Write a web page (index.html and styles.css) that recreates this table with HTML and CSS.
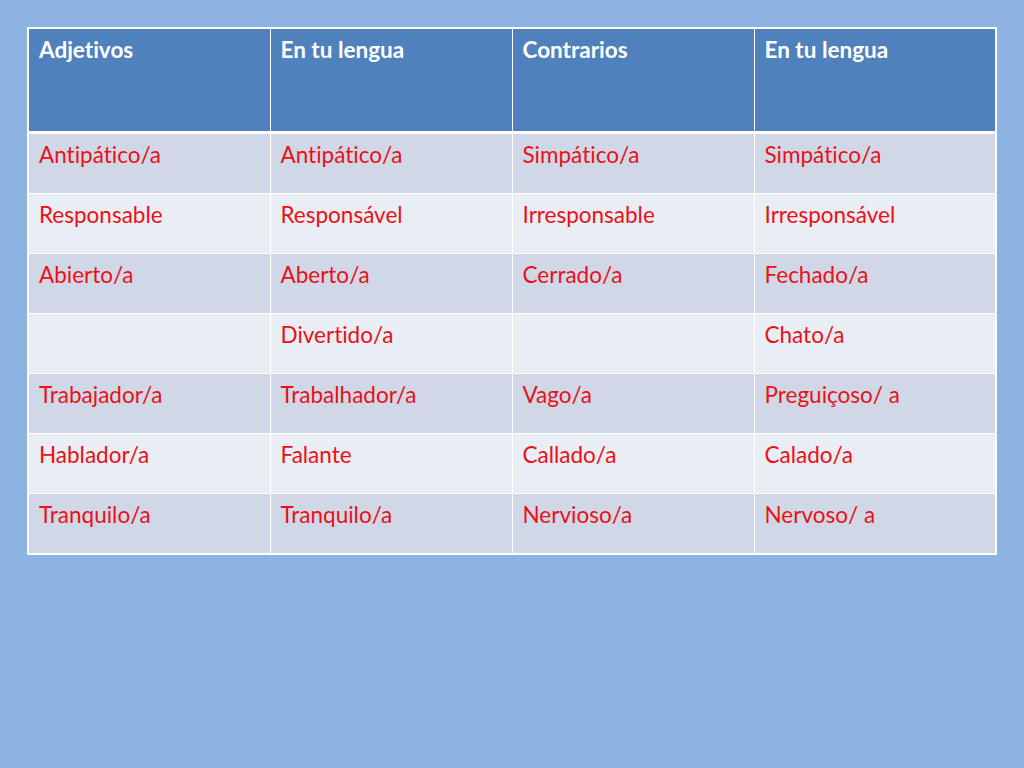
FILE: index.html
```html
<!DOCTYPE html>
<html lang="es">
<head>
<meta charset="utf-8">
<title>Adjetivos</title>
<link rel="stylesheet" href="styles.css">
</head>
<body>
<div class="slide">
<table class="vocab">
<thead>
<tr><th>Adjetivos</th><th>En tu lengua</th><th>Contrarios</th><th>En tu lengua</th></tr>
</thead>
<tbody>
<tr><td>Antipático/a</td><td>Antipático/a</td><td>Simpático/a</td><td>Simpático/a</td></tr>
<tr><td>Responsable</td><td>Responsável</td><td>Irresponsable</td><td>Irresponsável</td></tr>
<tr><td>Abierto/a</td><td>Aberto/a</td><td>Cerrado/a</td><td>Fechado/a</td></tr>
<tr><td></td><td>Divertido/a</td><td></td><td>Chato/a</td></tr>
<tr><td>Trabajador/a</td><td>Trabalhador/a</td><td>Vago/a</td><td>Preguiçoso/ a</td></tr>
<tr><td>Hablador/a</td><td>Falante</td><td>Callado/a</td><td>Calado/a</td></tr>
<tr><td>Tranquilo/a</td><td>Tranquilo/a</td><td>Nervioso/a</td><td>Nervoso/ a</td></tr>
</tbody>
</table>
</div>
</body>
</html>
```
FILE: styles.css
```css
html, body {
  margin: 0;
  padding: 0;
}
body {
  background: #8db3e2;
  font-family: "Lato", "Open Sans", sans-serif;
  font-variant-ligatures: none;
}
.slide {
  width: 1024px;
  height: 768px;
  padding: 27px 0 0 27px;
  box-sizing: border-box;
}
.vocab {
  border-collapse: collapse;
  width: 970px;
  table-layout: fixed;
  border: 2px solid #ffffff;
}
.vocab th, .vocab td {
  border: 1px solid #ffffff;
  text-align: left;
  vertical-align: top;
  padding: 7px 10px 0 10px;
  font-size: 22.5px;
  line-height: 27px;
}
.vocab th {
  background: #4f81bd;
  color: #ffffff;
  font-weight: bold;
  height: 95px;
  border-bottom: 3px solid #ffffff;
}
.vocab td {
  color: #ec1016;
  height: 52px;
}
.vocab tbody tr:nth-child(odd) td {
  background: #d0d8e8;
}
.vocab tbody tr:nth-child(even) td {
  background: #e9edf4;
}
```
